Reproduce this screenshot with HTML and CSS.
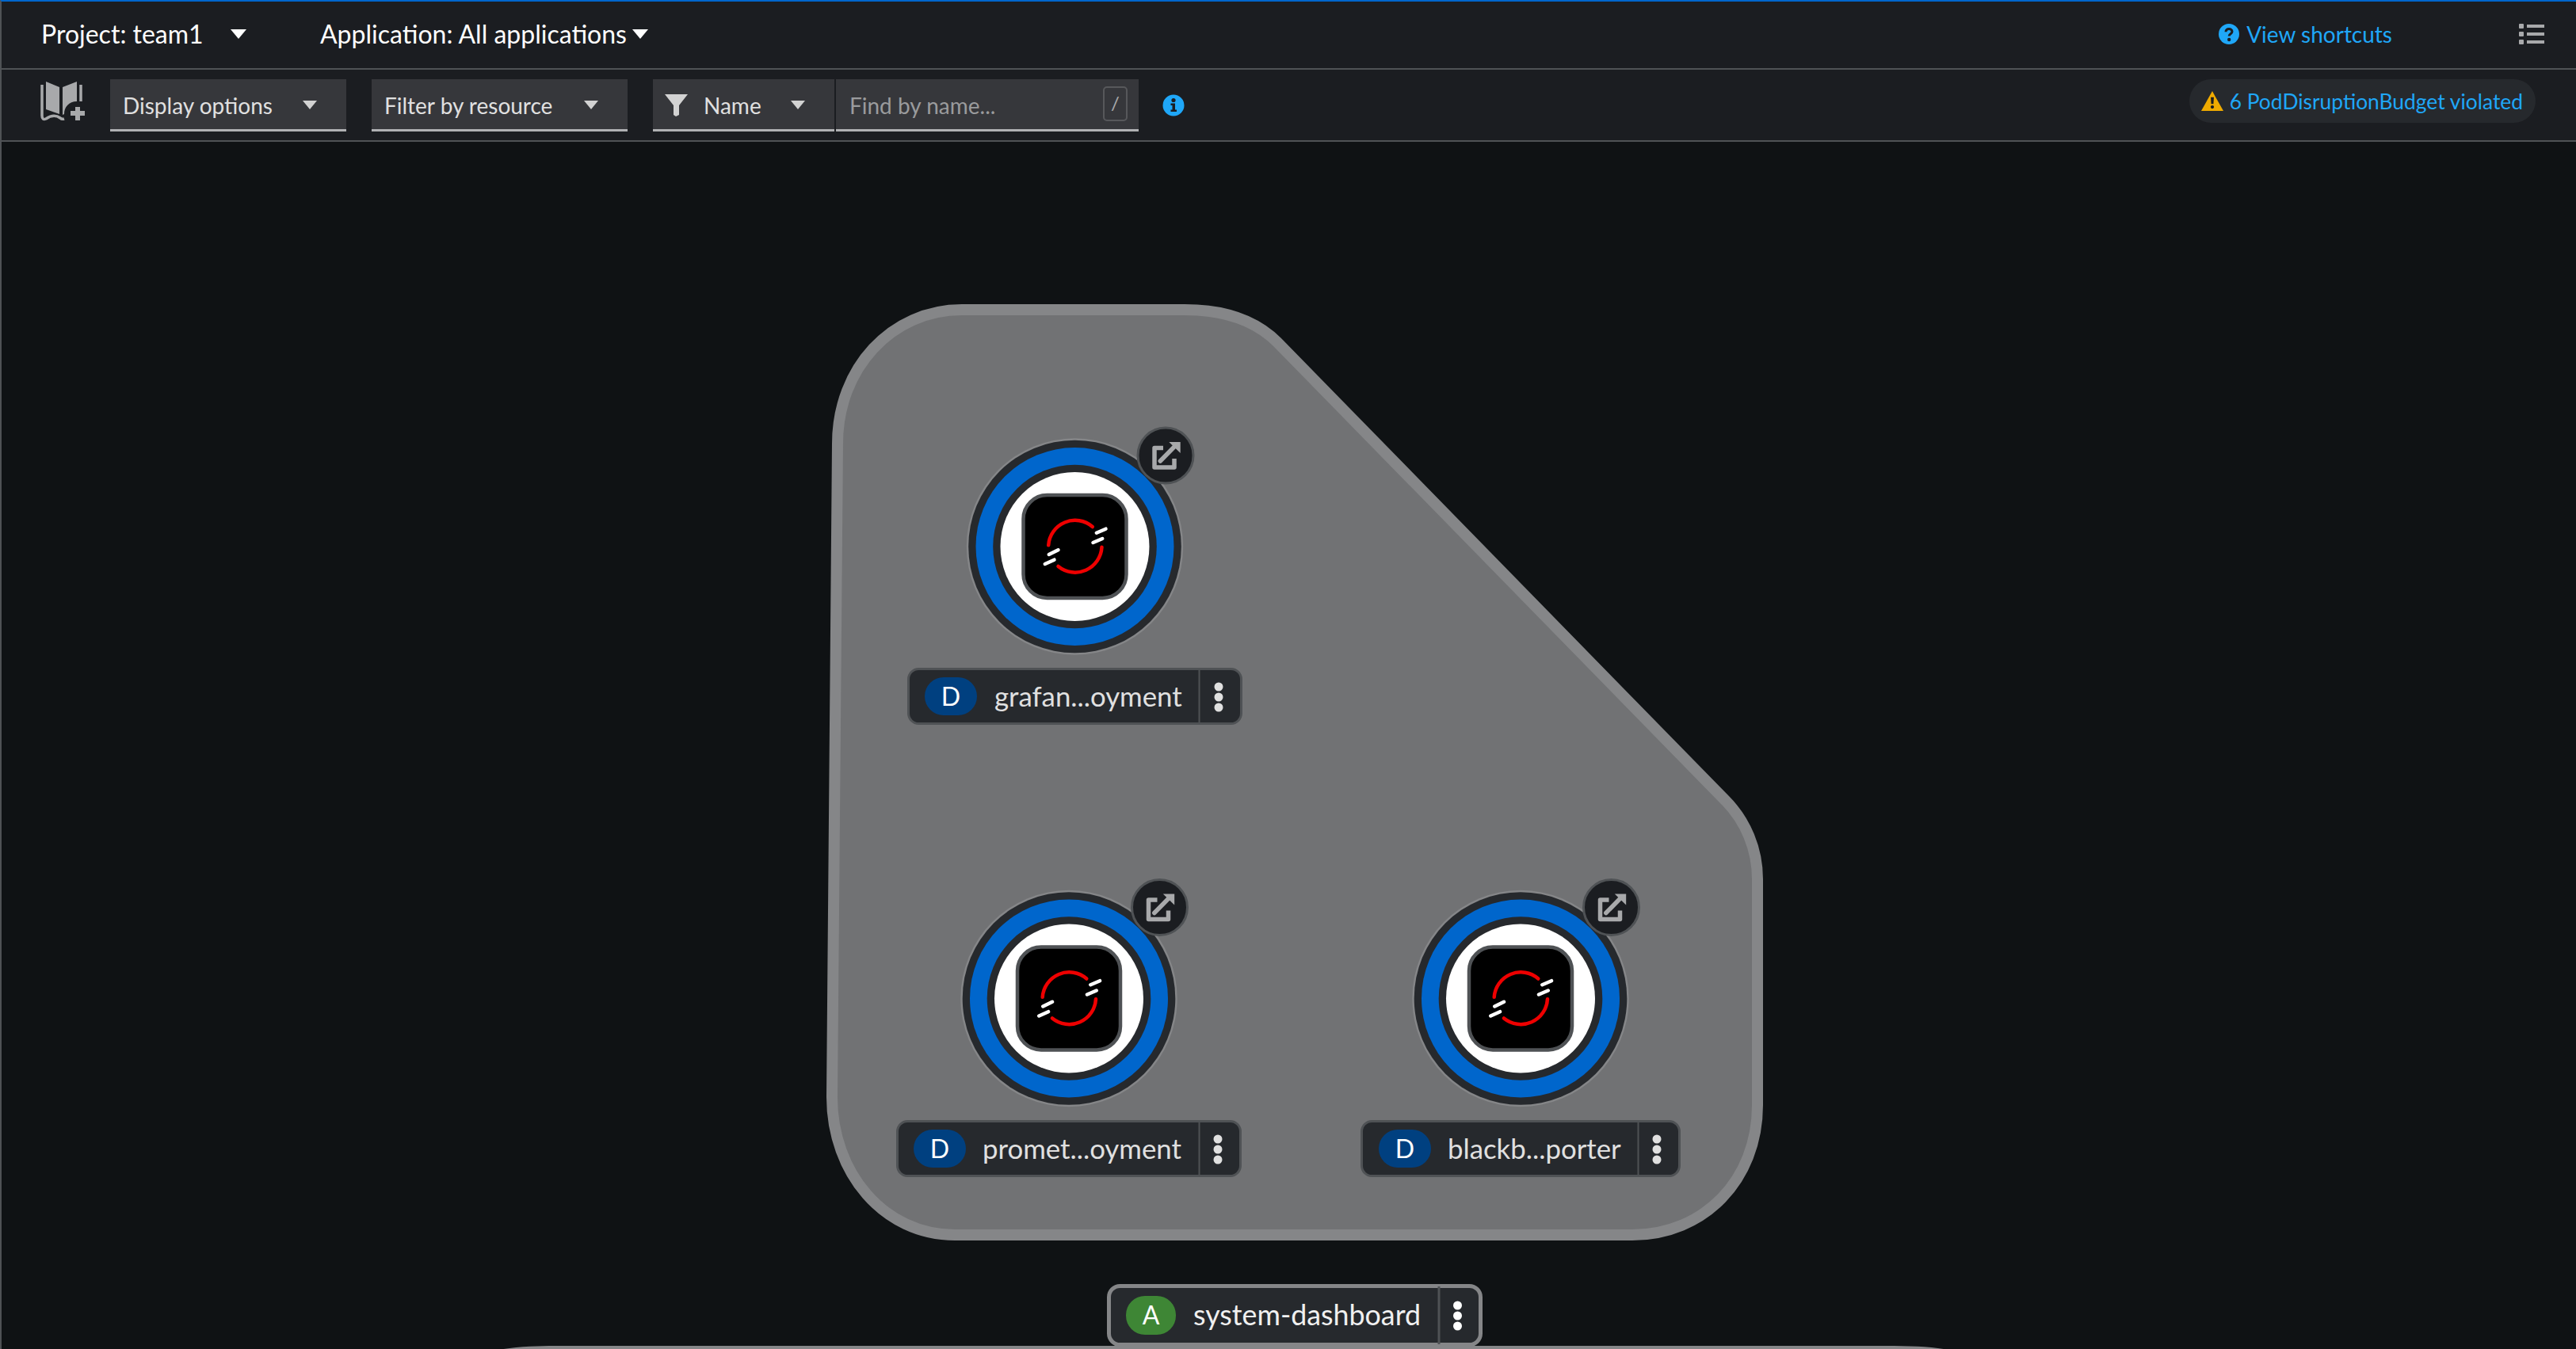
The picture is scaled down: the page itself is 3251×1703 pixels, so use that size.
FILE: index.html
```html
<!DOCTYPE html>
<html lang="en">
<head>
  <meta charset="UTF-8" />
  <title>Topology</title>
  <link rel="stylesheet" href="styles.css">
</head>
<body>
  <div class="page">
    <header class="project-bar">
      <div class="project-item project-item-first">
        <span>Project: team1</span>
        <svg class="caret-lg" viewBox="0 0 20 12"><path d="M0 0H20L10 12Z"/></svg>
      </div>
      <div class="project-item project-item-app">
        <span>Application: All applications</span>
        <svg class="caret-lg" viewBox="0 0 20 12"><path d="M0 0H20L10 12Z"/></svg>
      </div>
      <a class="shortcuts">
        <svg class="help-icon" viewBox="0 0 26 26">
          <circle cx="13" cy="13" r="13" fill="#1fa7f8"/>
          <path d="M9 10.2C9 7.8 10.8 6.6 13 6.6S17 7.9 17 10C17 12.6 13.2 12.8 13.2 15.4" fill="none" stroke="#1b1d21" stroke-width="3"/>
          <circle cx="13.2" cy="20" r="2.2" fill="#1b1d21"/>
        </svg>
        <span>View shortcuts</span>
      </a>
      <svg class="list-icon" viewBox="0 0 32 26">
        <rect x="0" y="0" width="6" height="6" rx="1"/><rect x="10" y="1" width="22" height="4"/>
        <rect x="0" y="10" width="6" height="6" rx="1"/><rect x="10" y="11" width="22" height="4"/>
        <rect x="0" y="20" width="6" height="6" rx="1"/><rect x="10" y="21" width="22" height="4"/>
      </svg>
    </header>

    <div class="toolbar">
      <svg class="book-icon" viewBox="0 4 60 52">
        <path d="M9 4L26 11V45L9 39Z"/>
        <path d="M30 11L48 4V29C38 29 32 36 32 45L30 46Z"/>
        <path d="M4 8V47Q4 53 9 51Q19 44 27 50Q29 52 32 51" fill="none" stroke="#a8a9ab" stroke-width="3.5"/>
        <path d="M53 8V29" fill="none" stroke="#a8a9ab" stroke-width="3.5"/>
        <path d="M46 36H52V41H58V47H52V53H46V47H40V41H46Z"/>
      </svg>
      <div class="select select-display">
        <span>Display options</span>
        <svg class="caret" viewBox="0 0 18 11"><path d="M0 0H18L9 11Z"/></svg>
      </div>
      <div class="select select-filter">
        <span>Filter by resource</span>
        <svg class="caret" viewBox="0 0 18 11"><path d="M0 0H18L9 11Z"/></svg>
      </div>
      <div class="search-group">
        <div class="select select-name">
          <svg class="funnel" viewBox="0 0 29 28"><path d="M0 0H29L18 14V26L14 28L11 26V14Z"/></svg>
          <span class="select-name-text">Name</span>
          <svg class="caret" viewBox="0 0 18 11"><path d="M0 0H18L9 11Z"/></svg>
        </div>
        <div class="search-input">
          <span>Find by name...</span>
          <kbd class="slash-key">/</kbd>
        </div>
      </div>
      <svg class="info-icon" viewBox="0 0 28 28">
        <circle cx="14" cy="14" r="13.5" fill="#1fa7f8"/>
        <circle cx="14" cy="7.5" r="2.6" fill="#1b1d21"/>
        <path d="M10.5 11.5H16V19.5H18V22H10.5V19.5H12.5V14H10.5Z" fill="#1b1d21"/>
      </svg>
      <div class="alert-chip">
        <svg class="warn-icon" viewBox="0 0 26 23">
          <path d="M13 0L26 23H0Z" fill="#f0ab00"/>
          <path d="M11.2 7H14.8L14.3 15H11.7Z" fill="#1b1d21"/>
          <circle cx="13" cy="18.5" r="2" fill="#1b1d21"/>
        </svg>
        <span>6 PodDisruptionBudget violated</span>
      </div>
    </div>

    <svg class="canvas" viewBox="2 179 3249 1524">
      <defs>
        <g id="workload">
          <circle r="136.7" class="node-halo"/>
          <circle r="134.3" class="node-dark"/>
          <circle r="125" class="node-pod"/>
          <circle r="103.3" class="node-dark"/>
          <circle r="94" class="node-white"/>
          <rect x="-65" y="-65" width="130" height="130" rx="30" class="node-logo-bg"/>
          <path d="M-33.3 -1.7A33.7 33.7 0 0 1 22.3 -25" class="logo-red"/>
          <path d="M34 .7A33.7 33.7 0 0 1 -21 25" class="logo-red"/>
          <path d="M27.3 -17.3L39 -22.3M23 -5L34.7 -10M-32.7 10L-21 4.3M-37.7 22L-26 16.7" class="logo-white"/>
          <g transform="translate(114.5 -115)">
            <circle r="35" class="deco-bg"/>
            <path d="M-3 -9.5H-14V15H11V4" class="deco-box"/>
            <path d="M-6.7 7L11 -11" class="deco-line"/>
            <path d="M4.3 -17H18.7V-3Z" class="deco-head"/>
          </g>
        </g>
        <g id="kebab">
          <circle cy="-13" r="5.5"/>
          <circle r="5.5"/>
          <circle cy="13" r="5.5"/>
        </g>
      </defs>

      <path class="hull" d="M1214 391L1495 391C1545 391 1585 405 1612 432L2177 1010C2203 1036 2218 1072 2218 1110L2218 1395C2218 1490 2150 1559 2060 1559L1205 1559C1115 1559 1050 1480 1050 1385L1057 560C1057 465 1125 391 1214 391Z"/>
      <path class="hull-next" d="M630 1704C650 1700 680 1699 700 1699L2380 1699C2410 1699 2440 1700 2458 1704Z"/>

      <use href="#workload" x="1356.5" y="690"/>
      <rect class="label-box" x="1146.5" y="844.5" width="420" height="69" rx="13"/>
      <rect class="badge-d" x="1167" y="855" width="66" height="48" rx="24"/>
      <text class="badge-text" x="1200" y="891">D</text>
      <text class="label-text" x="1255" y="892">grafan...oyment</text>
      <path class="label-div" d="M1513.5 846V912"/>
      <use href="#kebab" class="kebab" x="1538" y="880"/>

      <use href="#workload" x="1349" y="1260.5"/>
      <rect class="label-box" x="1132.5" y="1415.5" width="433" height="69" rx="13"/>
      <rect class="badge-d" x="1153" y="1426" width="66" height="48" rx="24"/>
      <text class="badge-text" x="1186" y="1462">D</text>
      <text class="label-text" x="1240" y="1463">promet...oyment</text>
      <path class="label-div" d="M1513.5 1417V1483"/>
      <use href="#kebab" class="kebab" x="1537" y="1451"/>

      <use href="#workload" x="1919" y="1260.5"/>
      <rect class="label-box" x="1718.5" y="1415.5" width="401" height="69" rx="13"/>
      <rect class="badge-d" x="1740" y="1426" width="66" height="48" rx="24"/>
      <text class="badge-text" x="1773" y="1462">D</text>
      <text class="label-text" x="1827" y="1463">blackb...porter</text>
      <path class="label-div" d="M2067.5 1417V1483"/>
      <use href="#kebab" class="kebab" x="2091" y="1451"/>

      <rect class="label-box label-box-app" x="1399.5" y="1623.5" width="469" height="74" rx="14"/>
      <rect class="badge-a" x="1421" y="1636" width="63" height="49" rx="24"/>
      <text class="badge-text" x="1452.5" y="1672">A</text>
      <text class="label-text label-text-app" x="1506" y="1673">system-dashboard</text>
      <path class="label-div label-div-app" d="M1816 1624V1697"/>
      <use href="#kebab" class="kebab kebab-app" x="1839.5" y="1661"/>
    </svg>
  </div>
</body>
</html>
```

FILE: styles.css
```css
html, body {
  margin: 0;
  height: 100%;
  overflow: hidden;
  background: #0f1214;
}
body {
  font-family: Lato, "Noto Sans", sans-serif;
}
.page {
  display: flex;
  flex-direction: column;
  height: 1703px;
  box-sizing: border-box;
  border-top: 2px solid #06c;
  border-left: 2px solid #4f5255;
}

/* top row */
.project-bar {
  display: flex;
  align-items: center;
  height: 81px;
  flex: none;
  padding: 0 40px 3px 0;
  background: #1b1d21;
  border-bottom: 2px solid #4f5255;
  color: #fff;
  font-size: 32px;
}
.project-item {
  display: flex;
  align-items: center;
}
.project-item-first {
  margin-left: 50px;
  width: 352px;
  gap: 34px;
}
.project-item-app {
  gap: 7px;
}
.caret-lg {
  width: 20px;
  height: 12px;
  fill: #fff;
}
.shortcuts {
  display: flex;
  align-items: center;
  gap: 9px;
  margin-left: auto;
  margin-right: 160px;
  color: #1fa7f8;
  font-size: 28px;
}
.help-icon {
  width: 26px;
  height: 26px;
}
.list-icon {
  width: 32px;
  height: 26px;
  fill: #a8a9ab;
}

/* second row */
.toolbar {
  display: flex;
  align-items: center;
  height: 89px;
  flex: none;
  background: #1b1d21;
  border-bottom: 2px solid #4f5255;
  color: #e0e0e0;
  font-size: 28px;
}
.book-icon {
  width: 60px;
  height: 52px;
  margin: 0 30px 8px 47px;
  fill: #a8a9ab;
}
.select {
  display: flex;
  align-items: center;
  justify-content: space-between;
  box-sizing: border-box;
  height: 66px;
  padding: 3px 37px 0 16px;
  background: #36373b;
  border-bottom: 3px solid #b0b1b3;
}
.select-display {
  width: 298px;
  margin-right: 32px;
}
.select-filter {
  width: 323px;
  margin-right: 32px;
}
.caret {
  width: 18px;
  height: 11px;
  fill: #d2d2d2;
}
.search-group {
  display: flex;
  gap: 2px;
}
.select-name {
  width: 229px;
  padding-left: 15px;
  justify-content: flex-start;
}
.funnel {
  width: 29px;
  height: 28px;
  fill: #d2d2d2;
  margin-right: 20px;
}
.select-name-text {
  margin-right: auto;
}
.search-input {
  display: flex;
  align-items: center;
  justify-content: space-between;
  box-sizing: border-box;
  width: 382px;
  height: 66px;
  padding: 3px 14px 0 17px;
  background: #36373b;
  border-bottom: 3px solid #b0b1b3;
  color: #9a9b9d;
}
.slash-key {
  box-sizing: border-box;
  width: 31px;
  height: 44px;
  margin-top: -3px;
  border: 2px solid #57585b;
  border-radius: 5px;
  font-family: inherit;
  font-size: 24px;
  line-height: 38px;
  text-align: center;
  color: #a8a9ab;
}
.info-icon {
  width: 28px;
  height: 28px;
  margin-left: 30px;
}
.alert-chip {
  display: flex;
  align-items: center;
  gap: 8px;
  margin: -10px 51px 0 auto;
  height: 55px;
  padding: 0 16px 0 15px;
  box-sizing: border-box;
  background: #26292d;
  border-radius: 28px;
  color: #1fa7f8;
  font-size: 26.4px;
}
.warn-icon {
  width: 28px;
  height: 25px;
}

/* topology */
.canvas {
  display: block;
  flex: 1;
  width: 100%;
  min-height: 0;
  background: #0f1214;
}
.hull {
  fill: #717274;
  stroke: #858688;
  stroke-width: 14;
}
.hull-next {
  fill: #858688;
}
.node-halo { fill: #858688; }
.node-dark { fill: #26292d; }
.node-pod { fill: #06c; }
.node-white { fill: #fff; }
.node-logo-bg {
  fill: #000;
  stroke: #4f5255;
  stroke-width: 4.5;
}
.logo-red {
  fill: none;
  stroke: #e00;
  stroke-width: 4.5;
  stroke-linecap: round;
}
.logo-white {
  fill: none;
  stroke: #fff;
  stroke-width: 4.5;
  stroke-linecap: round;
}
.deco-bg {
  fill: #1b1d21;
  stroke: #4f5255;
  stroke-width: 3;
}
.deco-box {
  fill: none;
  stroke: #a8a9ab;
  stroke-width: 5.5;
  stroke-linejoin: round;
}
.deco-line {
  fill: none;
  stroke: #a8a9ab;
  stroke-width: 5.5;
  stroke-linecap: round;
}
.deco-head { fill: #a8a9ab; }
.label-box {
  fill: #26292d;
  stroke: #4f5255;
  stroke-width: 3;
}
.label-box-app {
  stroke: #858688;
  stroke-width: 5;
}
.badge-d { fill: #004080; }
.badge-a { fill: #3e8635; }
.badge-text {
  fill: #fff;
  font-size: 32px;
  text-anchor: middle;
}
.label-text {
  fill: #e0e0e0;
  font-size: 34.8px;
}
.label-text-app {
  fill: #f0f0f0;
  font-size: 35.8px;
}
.label-div {
  stroke: #4f5255;
  stroke-width: 2;
}
.label-div-app {
  stroke-width: 3;
}
.kebab { fill: #e0e0e0; }
.kebab-app { fill: #fff; }
```
